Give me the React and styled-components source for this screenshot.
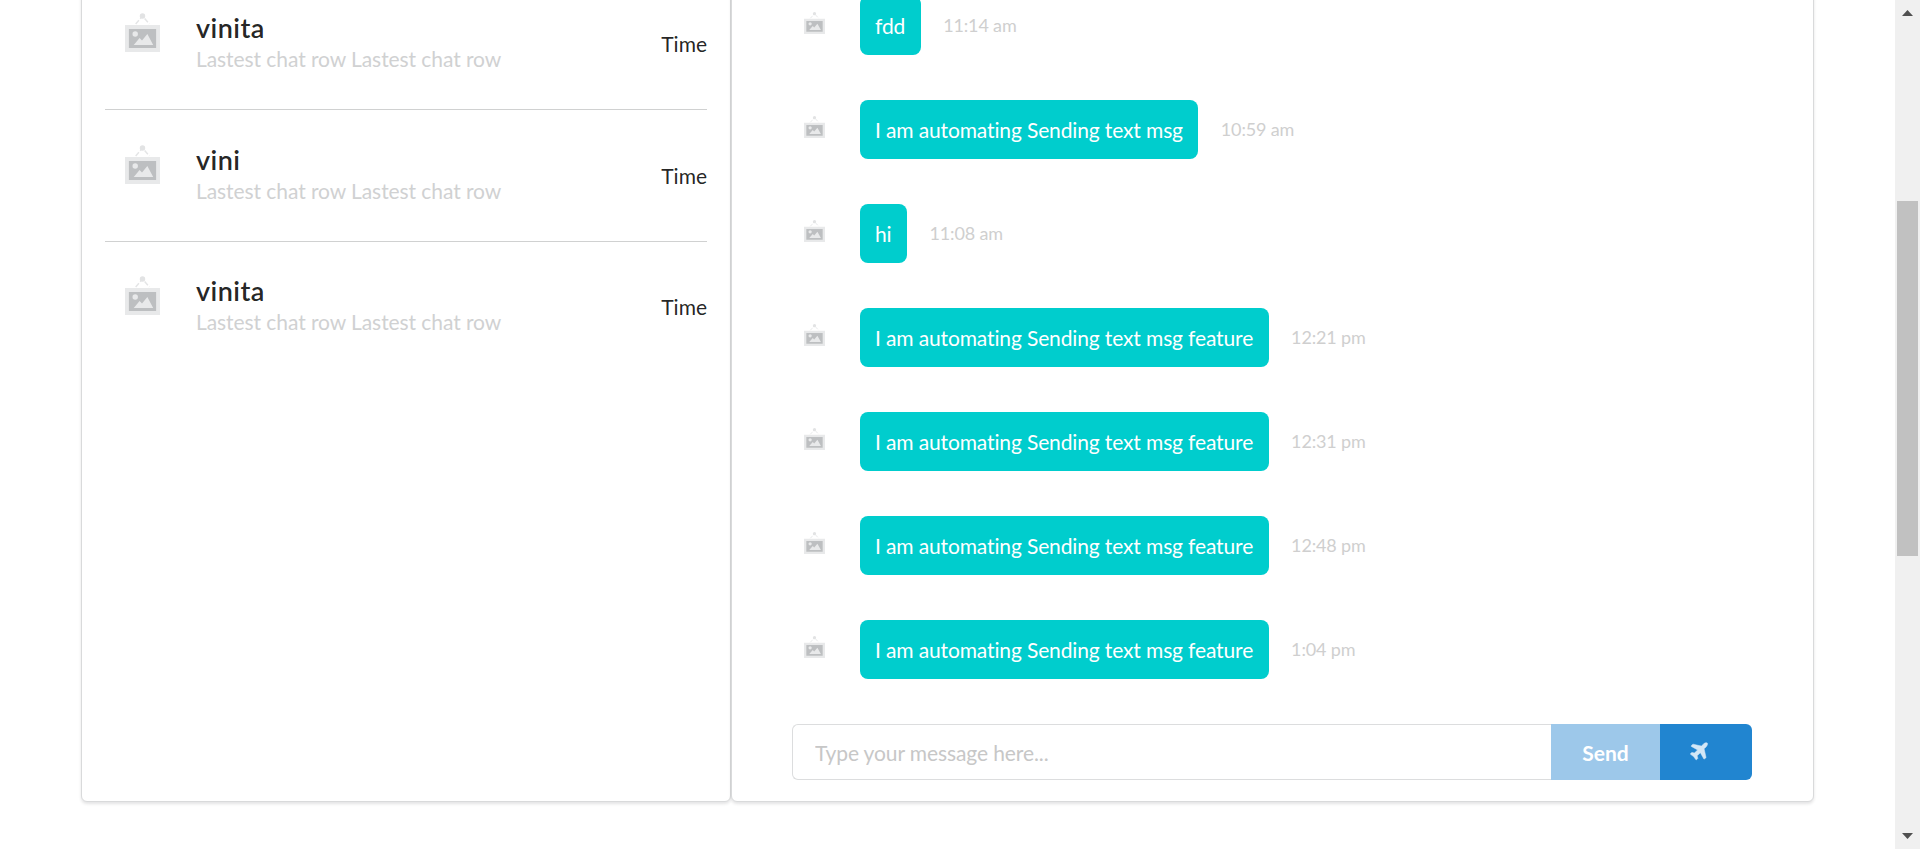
import React from "react";
import styled, { createGlobalStyle } from "styled-components";

const GlobalStyle = createGlobalStyle`
  *, *::before, *::after { box-sizing: border-box; }
  body { margin: 0; background: #fff; overflow: hidden; }
  body, input, button {
    font-family: Lato, "Liberation Sans", sans-serif;
    font-size: 21px;
    font-variant-ligatures: none;
  }
`;

const Page = styled.div`
  display: flex;
  height: 849px;
  overflow: hidden;
  color: rgba(0, 0, 0, 0.87);
`;

const Content = styled.main`
  flex: 1;
  display: flex;
  align-items: flex-start;
  padding-left: 81px;
`;

const Panel = styled.section`
  width: ${(p) => p.$width}px;
  height: 825px;
  margin-top: -23px;
  background: #fff;
  border: 1px solid #d9dadb;
  border-radius: 6px;
  box-shadow: 0 2px 3px 0 rgba(34, 36, 38, 0.12);
`;

const ContactPanel = styled(Panel)`
  padding: 0 23px;
`;

const ContactRow = styled.div`
  display: flex;
  align-items: center;
  height: ${(p) => (p.$last ? 130 : 132)}px;
  border-bottom: 1px solid ${(p) => (p.$last ? "transparent" : "#d0d1d1")};
`;

const ContactIcon = styled.div`
  width: 91px;
  padding-left: 20px;
  height: 61px;
`;

const ContactText = styled.div`
  flex: 1;
  padding-bottom: 4px;
`;

const ContactName = styled.div`
  font-size: 27px;
  font-weight: 600;
  line-height: 33px;
  letter-spacing: 0.45px;
`;

const ContactPreview = styled.div`
  color: #d0d1d2;
  line-height: 29px;
  letter-spacing: -0.07px;
`;

const ContactTime = styled.div`
  line-height: 30px;
`;

const ChatPanel = styled(Panel)`
  display: flex;
  flex-direction: column;
  padding: 18px 61px 0 60px;
`;

const Message = styled.div`
  display: flex;
  align-items: center;
  height: 59px;
  margin-bottom: 45px;
`;

const MessageIcon = styled.div`
  display: flex;
  align-items: flex-start;
  width: 68px;
  height: 27px;
  padding-left: 12px;
`;

const Bubble = styled.div`
  height: 59px;
  padding: 0 15.5px 0 15px;
  line-height: 60px;
  letter-spacing: -0.13px;
  color: #fff;
  background: #00cdcd;
  border-radius: 8px;
`;

const MessageTime = styled.time`
  margin: -2px 0 0 22.5px;
  font-size: 18px;
  letter-spacing: -0.15px;
  color: #cfcfcf;
`;

const Composer = styled.form`
  display: flex;
  height: 56px;
`;

const MessageInput = styled.input`
  flex: 1;
  min-width: 0;
  padding: 0 22px;
  letter-spacing: -0.1px;
  border: 1px solid #dcddde;
  border-right: 0;
  border-radius: 6px 0 0 6px;
  outline: none;
  &::placeholder { color: #c7c7c7; opacity: 1; }
`;

const SendButton = styled.button`
  width: 109px;
  padding: 0;
  border: 0;
  background: #9dc8ea;
  color: #fff;
  font-weight: 700;
`;

const PlaneButton = styled.button`
  width: 92px;
  padding: 0 0 0 28px;
  border: 0;
  border-radius: 0 6px 6px 0;
  background: #2185d0;
  color: #d3e7f6;
  display: flex;
  align-items: center;
`;

const Scrollbar = styled.aside`
  width: 25px;
  display: flex;
  flex-direction: column;
  align-items: center;
  justify-content: space-between;
  padding: 10px 0;
  background: #f0f0f0;
`;

const Arrow = styled.svg`
  display: block;
  width: 11px;
  height: 6px;
  fill: #505050;
  transform: rotate(${(p) => (p.$down ? 180 : 0)}deg);
`;

const Track = styled.div`
  flex: 1;
  width: 21px;
  padding-top: 185px;
`;

const Thumb = styled.div`
  height: 355px;
  background: #c1c1c1;
`;

function Picture({ width, height }) {
  return (
    <svg width={width} height={height} viewBox="0 0 36 39" preserveAspectRatio="none">
      <path d="M11 11 L18 3 L25 11" fill="none" stroke="#e4e5e6" strokeWidth="1.5" strokeDasharray="5 2" />
      <circle cx="18" cy="3" r="2.8" fill="#e2e3e4" />
      <rect y="12" width="36" height="27" fill="#e8e9ea" />
      <rect x="4" y="16" width="28" height="19" fill="#bdbfc1" />
      <circle cx="10.5" cy="21" r="2.8" fill="#e8e9ea" />
      <path d="M9 32 L15 25 L17.5 27.5 L23 21 L29 32 Z" fill="#e8e9ea" />
    </svg>
  );
}

function Plane() {
  return (
    <svg width="22" height="22" viewBox="0 0 1792 1792" fill="currentColor" stroke="currentColor" strokeWidth="40">
      <path d="M1568 160q44 52 12 148t-108 172l-161 161 160 696q5 19-12 33l-128 96q-7 6-19 6-4 0-7-1-15-3-21-16l-279-508-259 259 53 194q5 17-8 31l-96 96q-9 9-23 9h-2q-15-2-24-13l-189-252-252-189q-11-7-13-23-1-13 9-25l96-97q9-9 23-9 6 0 8 1l194 53 259-259-508-279q-14-8-17-24-2-16 9-27l128-128q14-13 30-8l665 159 160-160q76-76 172-108t148 12z" />
    </svg>
  );
}

const contacts = ["vinita", "vini", "vinita"];

const messages = [
  ["fdd", "11:14 am"],
  ["I am automating Sending text msg", "10:59 am"],
  ["hi", "11:08 am"],
  ["I am automating Sending text msg feature", "12:21 pm"],
  ["I am automating Sending text msg feature", "12:31 pm"],
  ["I am automating Sending text msg feature", "12:48 pm"],
  ["I am automating Sending text msg feature", "1:04 pm"],
];

export default function App() {
  return (
    <Page>
      <GlobalStyle />
      <Content>
        <ContactPanel $width={650}>
          {contacts.map((name, i) => (
            <ContactRow key={i} $last={i === contacts.length - 1}>
              <ContactIcon><Picture width={35} height={39} /></ContactIcon>
              <ContactText>
                <ContactName>{name}</ContactName>
                <ContactPreview>Lastest chat row Lastest chat row</ContactPreview>
              </ContactText>
              <ContactTime>Time</ContactTime>
            </ContactRow>
          ))}
        </ContactPanel>
        <ChatPanel $width={1083}>
          {messages.map(([text, time], i) => (
            <Message key={i}>
              <MessageIcon><Picture width={21} height={22} /></MessageIcon>
              <Bubble>{text}</Bubble>
              <MessageTime>{time}</MessageTime>
            </Message>
          ))}
          <Composer onSubmit={(e) => e.preventDefault()}>
            <MessageInput placeholder="Type your message here..." />
            <SendButton>Send</SendButton>
            <PlaneButton type="button" aria-label="Send file"><Plane /></PlaneButton>
          </Composer>
        </ChatPanel>
      </Content>
      <Scrollbar>
        <Arrow viewBox="0 0 11 6"><path d="M0 6 L5.5 0 L11 6 Z" /></Arrow>
        <Track><Thumb /></Track>
        <Arrow $down viewBox="0 0 11 6"><path d="M0 6 L5.5 0 L11 6 Z" /></Arrow>
      </Scrollbar>
    </Page>
  );
}
